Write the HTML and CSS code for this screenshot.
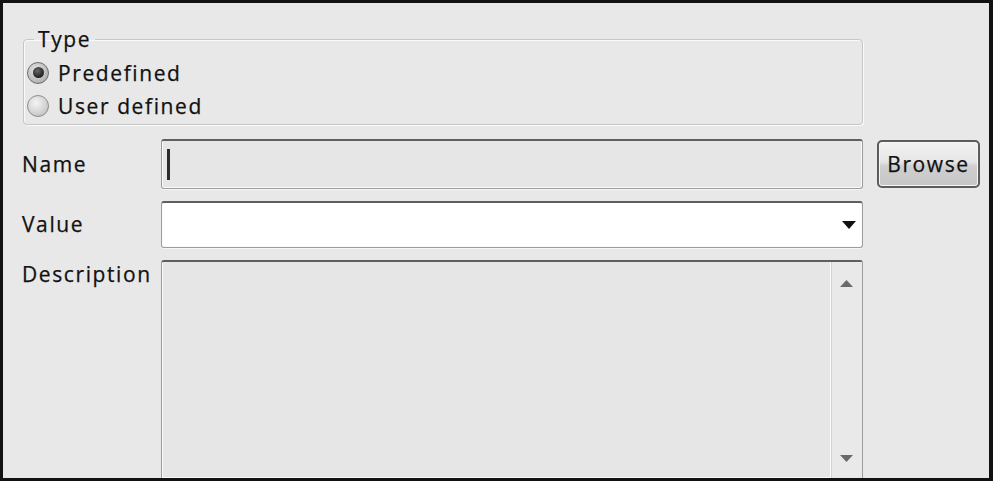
FILE: index.html
```html
<!DOCTYPE html>
<html lang="en">
<head>
    <meta charset="UTF-8">
    <title>Variable</title>
    <link rel="stylesheet" href="styles.css">
</head>
<body>
    <div class="window">
        <fieldset class="type-group">
            <legend>Type</legend>
            <label class="radio-row">
                <span class="radio checked"></span>
                <span>Predefined</span>
            </label>
            <label class="radio-row">
                <span class="radio"></span>
                <span>User defined</span>
            </label>
        </fieldset>

        <div class="fields">
            <div class="field-label">Name</div>
            <div class="textbox"><span class="caret"></span></div>
            <button type="button" class="browse-btn">Browse</button>

            <div class="field-label">Value</div>
            <div class="combo">
                <svg class="combo-arrow" width="14" height="8" viewBox="0 0 14 8">
                    <path d="M0 0 L14 0 L7 8 Z" fill="#111"/>
                </svg>
            </div>
            <div></div>

            <div class="field-label top">Description</div>
            <div class="memo">
                <div class="memo-text"></div>
                <div class="scrollbar">
                    <svg width="13" height="7" viewBox="0 0 13 7"><path d="M0 7 L6.5 0 L13 7 Z" fill="#6a6a6a"/></svg>
                    <svg width="13" height="7" viewBox="0 0 13 7"><path d="M0 0 L13 0 L6.5 7 Z" fill="#6a6a6a"/></svg>
                </div>
            </div>
        </div>
    </div>
</body>
</html>
```

FILE: styles.css
```css
body {
    margin: 0;
    font-family: "Open Sans", "DejaVu Sans", sans-serif;
    font-size: 21px;
    letter-spacing: 1.6px;
    color: #111;
    -webkit-text-stroke: 0.25px #111;
    background: #111;
}
.window {
    width: 993px;
    height: 481px;
    box-sizing: border-box;
    border: 3px solid #121212;
    border-right-width: 4px;
    background-color: #e8e8e8;
    padding: 20px 0 0 19px;
    overflow: hidden;
}
.type-group {
    width: 840px;
    box-sizing: border-box;
    margin: 0 0 0 1px;
    padding: 0 0 2px 3px;
    border: 1px solid #c6c6c6;
    border-radius: 4px;
    box-shadow: 1px 1px 0 #fafafa, inset 1px 1px 0 #fafafa;
}
.type-group legend {
    margin-left: 7px;
    padding: 0 4px;
    line-height: 33px;
}
.radio-row {
    display: flex;
    align-items: center;
    height: 33px;
}
.radio {
    width: 20px;
    height: 20px;
    margin-right: 9px;
    border: 1px solid #8c8c8c;
    border-radius: 50%;
    background: radial-gradient(circle at 40% 35%, #f4f4f4 0%, #d4d4d4 55%, #b4b4b4 100%);
    display: flex;
    align-items: center;
    justify-content: center;
}
.radio.checked {
    border-color: #6e6e6e;
    background: radial-gradient(circle at 40% 35%, #e4e4e4 0%, #bdbdbd 60%, #9a9a9a 100%);
}
.radio.checked::after {
    content: "";
    width: 11px;
    height: 11px;
    border-radius: 50%;
    background: radial-gradient(circle at 40% 35%, #6a6a6a 0%, #2a2a2a 60%, #1a1a1a 100%);
}
.fields {
    display: grid;
    grid-template-columns: 125px 702px 103px;
    column-gap: 14px;
    row-gap: 12px;
    align-items: center;
    margin-top: 14px;
}
.field-label {
    line-height: 33px;
}
.field-label.top {
    align-self: start;
    line-height: 28px;
}
.textbox, .combo, .memo {
    box-sizing: border-box;
    border: 1px solid #9c9c9c;
    border-top: 2px solid #5f5f5f;
    border-radius: 3px;
    box-shadow: inset 1px 0 0 #fafafa, inset -1px 0 0 #fafafa, inset 0 -1px 0 #fafafa, 0 1px 0 #f6f6f6;
}
.textbox {
    height: 50px;
    background-color: #e6e6e6;
    display: flex;
    align-items: center;
    padding-left: 5px;
}
.caret {
    width: 3px;
    height: 31px;
    background-color: #2a2a2a;
}
.browse-btn {
    height: 48px;
    font-family: inherit;
    font-size: 21px;
    letter-spacing: 1.6px;
    color: #111;
    border: 2px solid #5c5c5c;
    border-radius: 5px;
    background: linear-gradient(#f2f2f2 0%, #e6e6e6 45%, #cfcfcf 55%, #c6c6c6 100%);
    box-shadow: inset 0 0 0 1px #f6f6f6;
    padding: 0;
}
.combo {
    height: 47px;
    background-color: #fff;
    display: flex;
    align-items: center;
    justify-content: flex-end;
    padding-right: 6px;
}
.memo {
    height: 218px;
    background-color: #e6e6e6;
    display: flex;
    border-bottom: none;
    border-radius: 3px 3px 0 0;
}
.memo-text {
    flex: 1;
}
.scrollbar {
    width: 31px;
    border-left: 1px solid #fafafa;
    box-shadow: inset 1px 0 0 #d2d2d2;
    background-color: #e9e9e9;
    display: flex;
    flex-direction: column;
    justify-content: space-between;
    align-items: center;
    padding: 18px 0 16px;
}
```
